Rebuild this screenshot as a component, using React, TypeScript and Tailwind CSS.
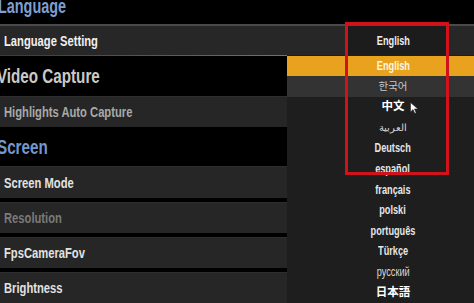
import React from "react";

const font = {
  fontFamily:
    '"Liberation Sans", Arial, "Noto Sans CJK KR", "Noto Sans CJK SC", sans-serif',
};

const items: { label: string; cls: string }[] = [
  { label: "English", cls: "bg-[#e9a21e] text-[#fff6e0]" },
  { label: "한국어", cls: "bg-[#333333] text-[#c8c8c8]" },
  { label: "中文", cls: "text-white" },
  { label: "العربية", cls: "text-[#d8d8d8]" },
  { label: "Deutsch", cls: "text-[#e6e6e6]" },
  { label: "español", cls: "text-[#e6e6e6]" },
  { label: "français", cls: "text-[#e6e6e6]" },
  { label: "polski", cls: "text-[#e6e6e6]" },
  { label: "português", cls: "text-[#e6e6e6]" },
  { label: "Türkçe", cls: "text-[#e6e6e6]" },
  { label: "русский", cls: "text-[#d8d8d8]" },
  { label: "日本語", cls: "text-white" },
];

function labelClass(label: string): string {
  if (label === "한국어") return "text-[10.5px] font-normal";
  if (label === "中文" || label === "日本語") return "text-[11.5px] font-bold";
  if (label === "العربية") return "text-[9.5px] font-normal";
  if (label === "русский") return "text-[13.5px] font-normal scale-x-[0.68]";
  return "text-[13.5px] font-bold scale-x-[0.68]";
}

function Header({ text, h, color }: { text: string; h: string; color: string }) {
  return (
    <div className={`${h} flex items-center bg-black`}>
      <span className={`inline-block origin-left scale-x-[0.76] ml-[-3px] text-[20px] font-bold leading-none ${color}`}>
        {text}
      </span>
    </div>
  );
}

function Row({ text, h, color }: { text: string; h: string; color: string }) {
  return (
    <div className={`${h} flex items-center bg-[#262626] border-t border-[#2e2e2e]`}>
      <span className={`inline-block origin-left scale-x-[0.8] ml-[4px] text-[14px] font-bold leading-none ${color}`}>
        {text}
      </span>
    </div>
  );
}

export default function App() {
  return (
    <div className="relative w-[474px] h-[303px] overflow-hidden bg-black" style={font}>
      <div className="flex flex-col">
        <div className="h-[24px] flex items-start bg-black">
          <span className="inline-block origin-left scale-x-[0.72] ml-[-2px] mt-[-4px] text-[20px] font-bold leading-none text-[#7e9fd2]">
            Language
          </span>
        </div>
        <div className="relative h-[31px] flex items-center bg-[#272727] border-t-2 border-[#4a4a4a]">
          <span className="inline-block origin-left scale-x-[0.8] ml-[4px] text-[14px] font-bold leading-none text-[#f0f0f0]">
            Language Setting
          </span>
          <div className="absolute left-[347px] top-0 bottom-0 w-[99px] bg-[#1c1c1c]" />
          <div className="absolute left-[343px] w-[100px] top-[8px] flex justify-center">
            <span className="inline-block scale-x-[0.68] text-[13.5px] font-bold text-[#eeeeee] leading-none">English</span>
          </div>
          <div className="absolute left-0 right-0 bottom-[-1px] h-[1px] bg-gradient-to-r from-[#3a3a3a] to-[#9a9a9a]" />
        </div>
        <Header text="Video Capture" h="h-[41px]" color="text-[#c9c9c9]" />
        <Row text="Highlights Auto Capture" h="h-[31px]" color="text-[#a9a9a9]" />
        <Header text="Screen" h="h-[39px]" color="text-[#7397cf]" />
        <div className="flex flex-col gap-[4px]">
          <Row text="Screen Mode" h="h-[32px]" color="text-[#e2e2e2]" />
          <Row text="Resolution" h="h-[31px]" color="text-[#7a7a7a]" />
          <Row text="FpsCameraFov" h="h-[31px]" color="text-[#e2e2e2]" />
          <Row text="Brightness" h="h-[31px]" color="text-[#e2e2e2]" />
        </div>
      </div>

      <div className="absolute left-[287px] top-[55px] w-[212px] h-[260px] bg-[#1e1e1e] flex flex-col pt-[0.5px]">
        {items.map((it) => (
          <div key={it.label} className={`h-[20.6px] flex items-center justify-center leading-none ${it.cls}`}>
            <span className={`inline-block ${labelClass(it.label)}`}>{it.label}</span>
          </div>
        ))}
      </div>

      <svg className="absolute left-[410px] top-[102px]" width="9" height="12" viewBox="0 0 9 12">
        <path d="M0.5 0.5 L0.5 10 L3 7.6 L4.8 11.5 L6.2 10.8 L4.5 7 L8 7 Z" fill="#ffffff" stroke="#222" strokeWidth="0.6" />
      </svg>

      <div className="absolute left-[345px] top-[22px] w-[104px] h-[153px] border-[3px] border-[#d0121a]" />
    </div>
  );
}
